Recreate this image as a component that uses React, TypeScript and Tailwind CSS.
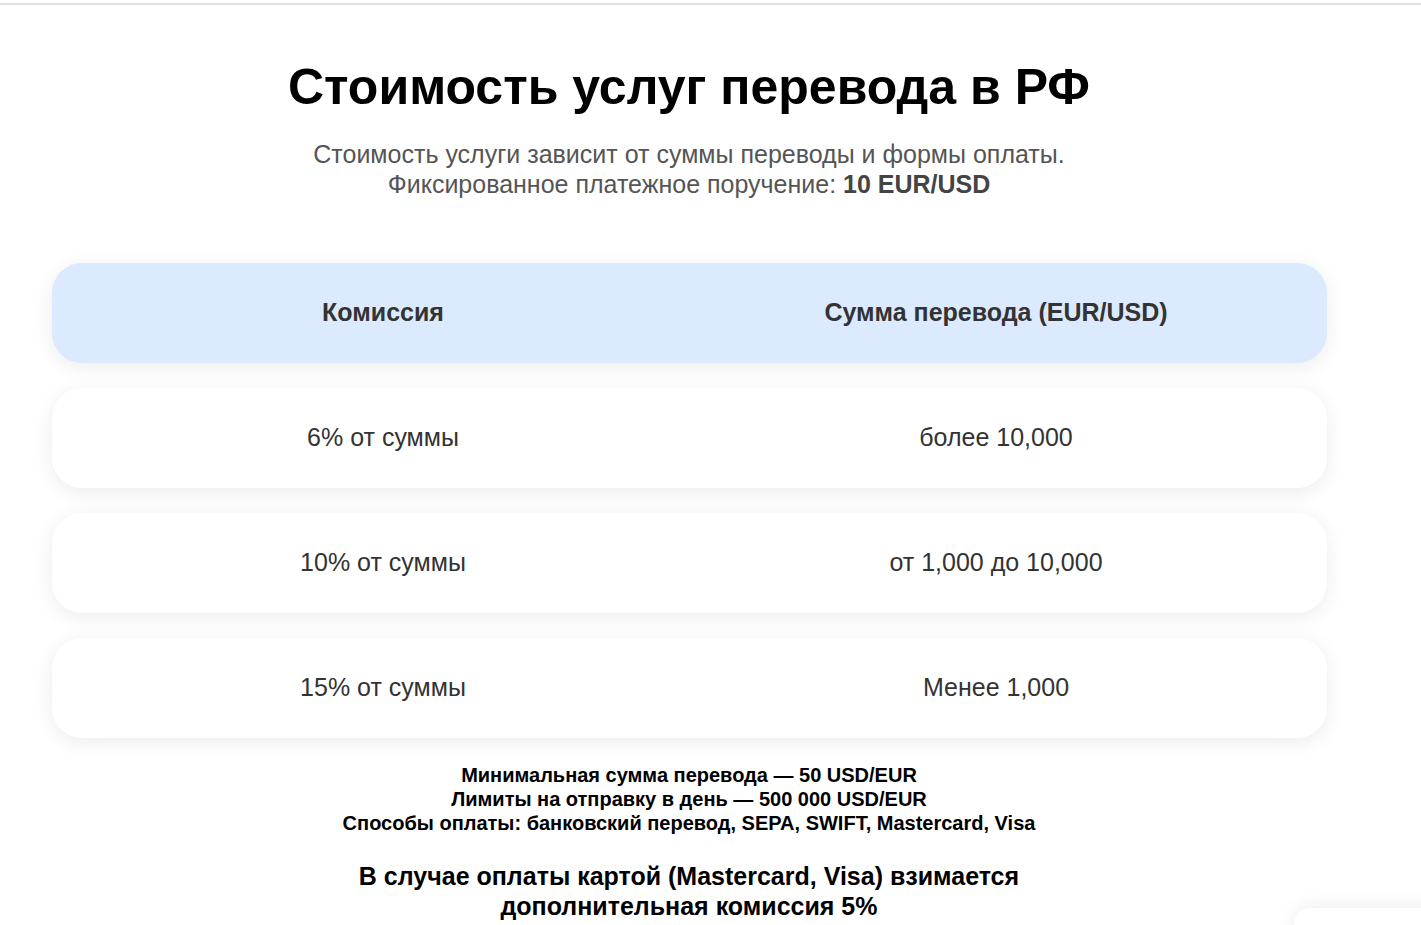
const rows = [
  { fee: "6% от суммы", amount: "более 10,000" },
  { fee: "10% от суммы", amount: "от 1,000 до 10,000" },
  { fee: "15% от суммы", amount: "Менее 1,000" },
];

const App = () => {
  return (
    <div className="relative min-h-[925px] overflow-hidden bg-white font-['Liberation_Sans',Arial,sans-serif]">
      <div className="mt-[3px] h-[2px] bg-[#dedede]" />

      <div className="w-[1378px]">
        <h1 className="mt-[55px] text-center text-[50px] font-bold leading-[55px] text-black">
          Стоимость услуг перевода в РФ
        </h1>
        <p className="mt-[24px] text-center text-[25px] leading-[30px] text-[#555]">
          Стоимость услуги зависит от суммы переводы и формы оплаты.
          <br />
          Фиксированное платежное поручение:{" "}
          <b className="text-[#444]">10 EUR/USD</b>
        </p>

        <div className="ml-[52px] mt-[64px] flex w-[1275px] flex-col gap-[25px]">
          <div className="grid h-[100px] grid-cols-[662px_564px] items-center rounded-[30px] bg-[#dbeafe] text-center text-[25px] font-bold text-[#333] shadow-[0_4px_20px_rgba(0,0,0,0.08)]">
            <span>Комиссия</span>
            <span>Сумма перевода (EUR/USD)</span>
          </div>
          {rows.map((row) => (
            <div
              key={row.fee}
              className="grid h-[100px] grid-cols-[662px_564px] items-center rounded-[30px] bg-white text-center text-[25px] text-[#333] shadow-[0_4px_20px_rgba(0,0,0,0.08)]"
            >
              <span>{row.fee}</span>
              <span>{row.amount}</span>
            </div>
          ))}
        </div>

        <div className="mt-[25px] text-center text-[20px] font-bold leading-[24px] text-black">
          <p>Минимальная сумма перевода — 50 USD/EUR</p>
          <p>Лимиты на отправку в день — 500 000 USD/EUR</p>
          <p>Способы оплаты: банковский перевод, SEPA, SWIFT, Mastercard, Visa</p>
        </div>

        <p className="mt-[26px] text-center text-[25px] font-bold leading-[30px] text-black">
          В случае оплаты картой (Mastercard, Visa) взимается
          <br />
          дополнительная комиссия 5%
        </p>
      </div>

      <div className="absolute left-[1294px] top-[908px] h-[120px] w-[200px] rounded-[16px] bg-white shadow-[0_0_20px_rgba(0,0,0,0.08)]" />
    </div>
  );
};

export default App;
